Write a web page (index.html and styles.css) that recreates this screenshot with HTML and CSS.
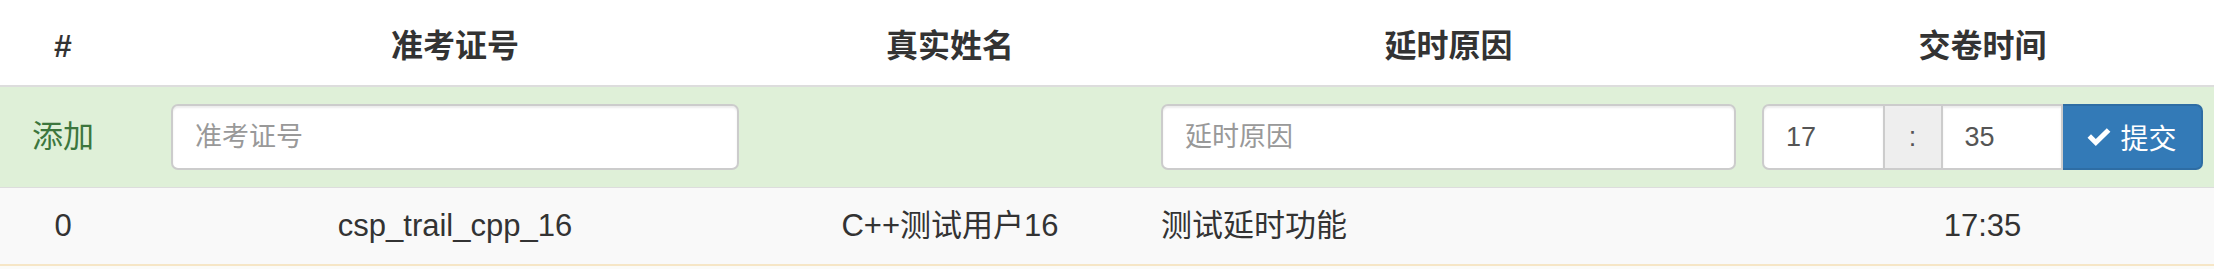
FILE: index.html
```html
<!DOCTYPE html>
<html lang="zh-CN">
<head>
<meta charset="utf-8">
<title>延时交卷</title>
<link rel="stylesheet" href="styles.css">
</head>
<body>
<table class="grid">
  <colgroup>
    <col class="c1"><col class="c2"><col class="c3"><col class="c4"><col class="c5">
  </colgroup>
  <thead>
    <tr>
      <th class="idx">#</th>
      <th>准考证号</th>
      <th>真实姓名</th>
      <th>延时原因</th>
      <th class="last">交卷时间</th>
    </tr>
  </thead>
  <tbody>
    <tr class="add-row">
      <td class="idx add-label">添加</td>
      <td><input class="ctrl" type="text" placeholder="准考证号"></td>
      <td></td>
      <td><input class="ctrl" type="text" placeholder="延时原因"></td>
      <td class="last">
        <div class="time-group">
          <input class="ctrl t-left" type="text" value="17">
          <span class="addon">:</span>
          <input class="ctrl t-mid" type="text" value="35">
          <button class="btn-submit" type="button">
            <svg class="ok" width="24" height="18" viewBox="0 0 24 18"><path d="M0.5 9.8 L4 6.3 L8.8 11 L19.8 0.2 L23.4 3.8 L8.8 18 Z" fill="#fff"/></svg>
            <span>提交</span>
          </button>
        </div>
      </td>
    </tr>
    <tr class="data-row">
      <td class="idx">0</td>
      <td>csp_trail_cpp_16</td>
      <td>C++测试用户16</td>
      <td class="left">测试延时功能</td>
      <td class="last">17:35</td>
    </tr>
  </tbody>
</table>
<div class="next-row"></div>
</body>
</html>
```
FILE: styles.css
```css
html, body {
  margin: 0;
  padding: 0;
  overflow: hidden;
  background: #fff;
}
body {
  font-family: "Liberation Sans", "Noto Sans CJK SC", sans-serif;
  color: #333;
  font-size: 31px;
}
.grid {
  width: 2214px;
  table-layout: fixed;
  border-collapse: separate;
  border-spacing: 0;
}
.c1 { width: 158px; }
.c2 { width: 594px; }
.c3 { width: 396px; }
.c4 { width: 601px; }
.c5 { width: 465px; }

.grid th {
  font-size: 32px;
  font-weight: bold;
  line-height: 44px;
  padding: 24px 13px 17px;
  text-align: center;
  vertical-align: bottom;
  border-bottom: 2px solid #ddd;
}
.grid td {
  padding: 0 13px;
  text-align: center;
  vertical-align: middle;
  line-height: 44px;
}
.grid th.idx, .grid td.idx {
  padding-left: 0;
  padding-right: 32px;
}
.grid th.last, .grid td.last {
  padding-right: 11px;
}
.add-row td {
  background: #dff0d8;
  padding-top: 17px;
  padding-bottom: 17px;
}
.add-label {
  color: #3c763d;
}
.data-row td {
  background: #f9f9f9;
  border-top: 1px solid #ddd;
  padding-top: 16px;
  padding-bottom: 16px;
}
.grid td.left {
  text-align: left;
}
.ctrl {
  display: block;
  width: 100%;
  height: 66px;
  box-sizing: border-box;
  padding: 0 22px;
  font-family: "Liberation Sans", "Noto Sans CJK SC", sans-serif;
  font-size: 27px;
  color: #555;
  background: #fff;
  border: 2px solid #ccc;
  border-radius: 7px;
  box-shadow: inset 0 2px 2px rgba(0, 0, 0, 0.075);
  outline: none;
}
.ctrl::placeholder {
  color: #999;
}
.time-group {
  display: flex;
  height: 66px;
}
.time-group .ctrl {
  flex: 1 1 0;
  min-width: 0;
}
.t-left {
  border-radius: 7px 0 0 7px;
}
.t-mid {
  border-radius: 0;
  border-left-width: 0;
}
.addon {
  flex: 0 0 58px;
  box-sizing: border-box;
  background: #eee;
  border-top: 2px solid #ccc;
  border-bottom: 2px solid #ccc;
  border-right: 2px solid #ccc;
  color: #555;
  font-size: 27px;
  display: flex;
  align-items: center;
  justify-content: center;
}
.btn-submit {
  flex: 0 0 140px;
  box-sizing: border-box;
  height: 66px;
  background: #337ab7;
  border: 2px solid #2e6da4;
  border-left-width: 0;
  border-radius: 0 7px 7px 0;
  color: #fff;
  font-family: "Liberation Sans", "Noto Sans CJK SC", sans-serif;
  font-size: 28px;
  display: flex;
  align-items: center;
  justify-content: center;
  gap: 9px;
  padding: 0;
}
.ok {
  display: block;
}
.next-row {
  height: 3px;
  border-top: 2px solid #f6e6c6;
  background: #fbfbf8;
}
```
